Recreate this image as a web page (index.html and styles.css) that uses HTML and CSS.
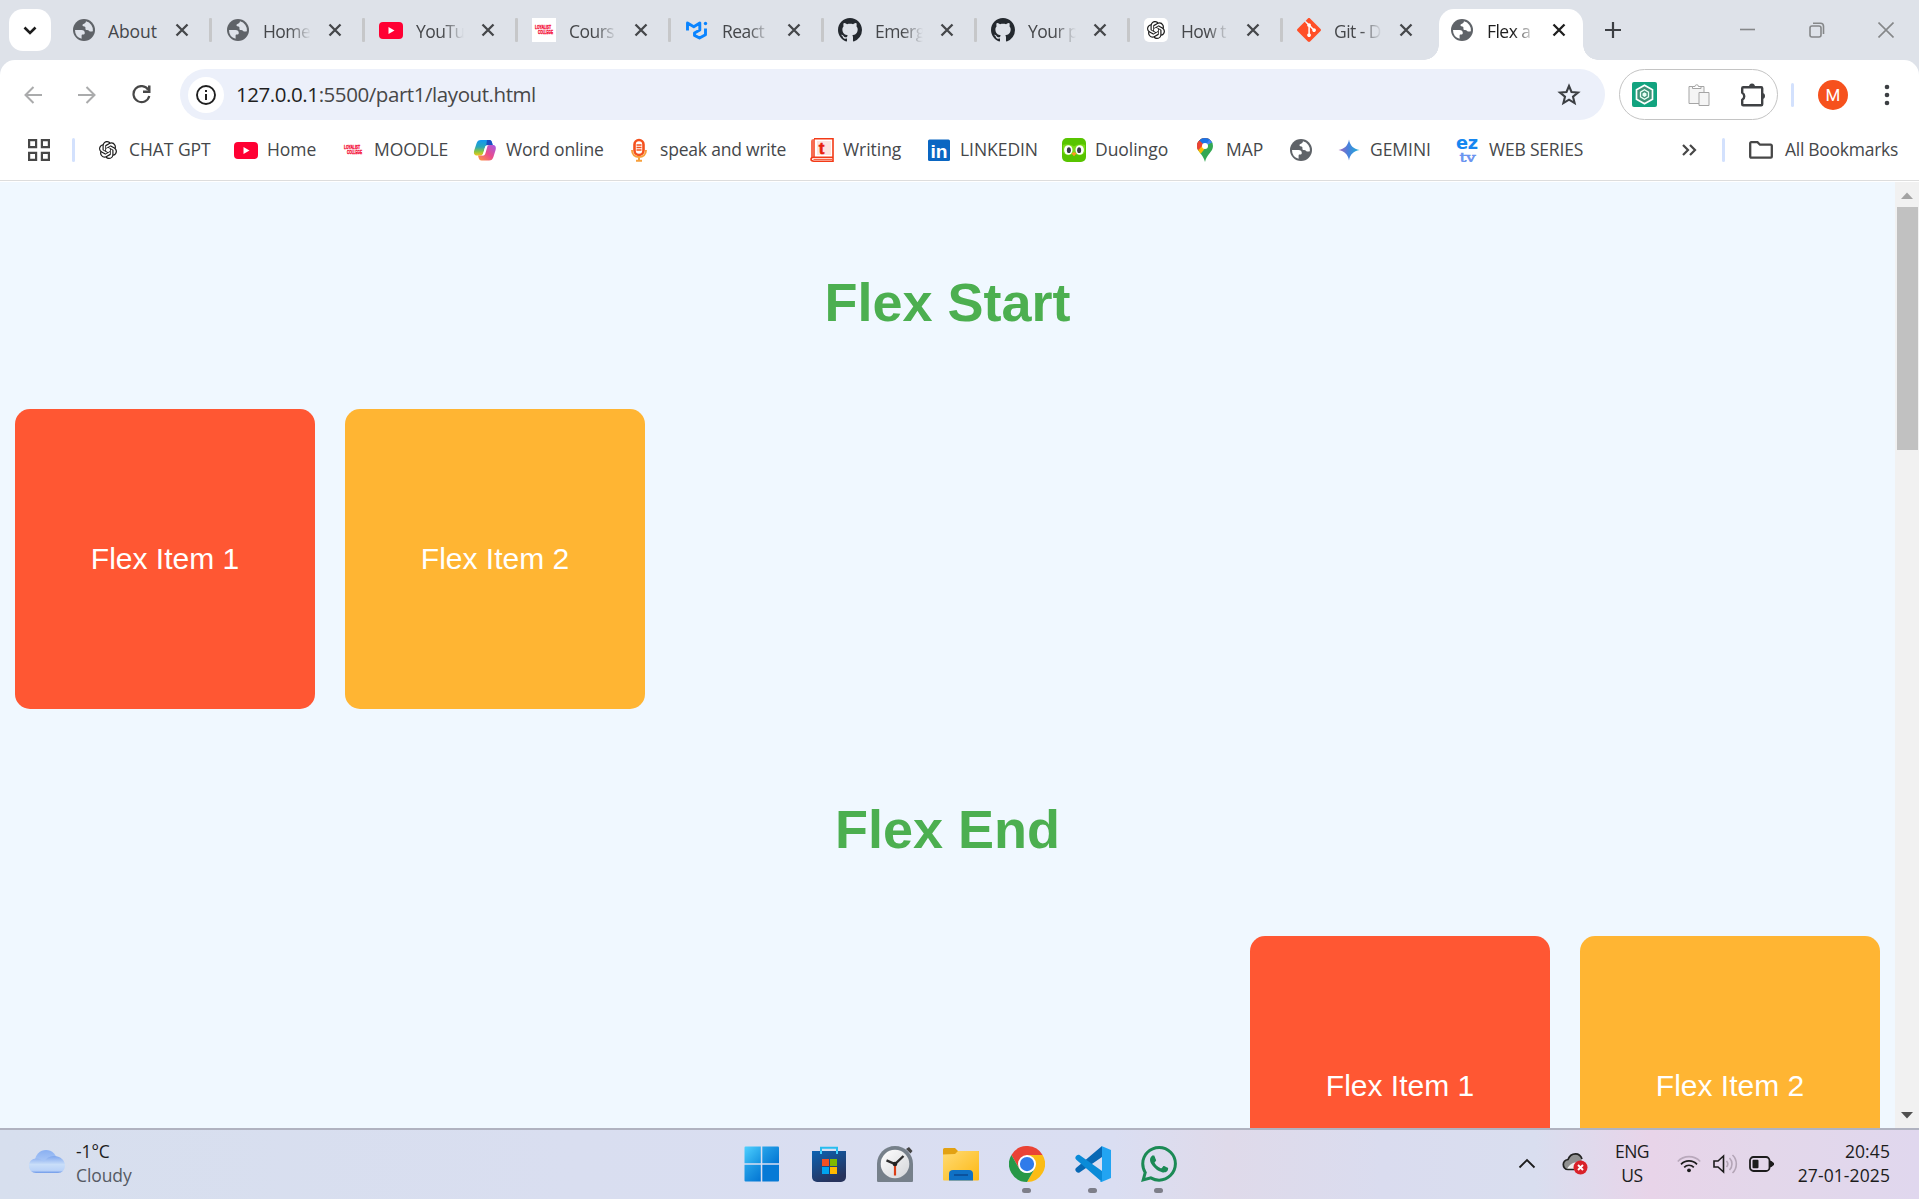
FILE: index.html
```html
<!DOCTYPE html>
<html lang="en">
<head>
<meta charset="utf-8">
<title>Flex and Grid</title>
<link rel="stylesheet" href="styles.css">
</head>
<body>
<svg class="sprite" aria-hidden="true">
  <symbol id="globe" viewBox="0 0 24 24"><circle cx="12" cy="12" r="11" fill="#5f6368"/><g class="land"><path d="M14 3.300c-.3 1.900-1.600 2.300-3 3-.8.500-.8 1.700.3 1.900 1.500.2 2.400.8 2.200 1.900-.2 1-.300 1.700.700 1.800 1.600.1 2.300.1 3 1 .6.700 1.900.5 3.700.300A9 9 0 0 0 14 3.300z"/><path d="M3 12h6.500c2.200 0 3.300 1.300 3.300 3 0 1.200-.8 1.600-2 1.600-.9 0-1.200.5-1.200 1.400v2.700A9 9 0 0 1 3 12z"/></g></symbol>
  <symbol id="close" viewBox="0 0 14 14"><path d="M1.500 1.500l11 11M12.500 1.500l-11 11" stroke="currentColor" stroke-width="2.300" fill="none"/></symbol>
  <symbol id="youtube" viewBox="0 0 24 24"><rect x="0" y="4" width="24" height="17" rx="4" fill="#ff0033"/><path d="M9.500 9l6 3.500-6 3.500z" fill="#fff"/></symbol>
  <symbol id="github" viewBox="0 0 16 16"><path fill="#24292f" d="M8 0C3.580 0 0 3.580 0 8c0 3.540 2.290 6.530 5.470 7.590.4.070.550-.170.550-.380 0-.190-.010-.820-.010-1.490-2.010.370-2.530-.490-2.690-.940-.090-.230-.480-.940-.820-1.130-.280-.150-.680-.520-.010-.530.630-.010 1.080.580 1.230.820.720 1.210 1.870.870 2.330.660.070-.520.280-.870.510-1.070-1.780-.200-3.640-.890-3.640-3.950 0-.870.310-1.590.820-2.150-.080-.200-.360-1.020.080-2.120 0 0 .670-.210 2.200.820.640-.180 1.320-.270 2-.270s1.360.090 2 .270c1.530-1.040 2.200-.820 2.200-.820.440 1.100.160 1.920.080 2.120.510.560.820 1.270.820 2.150 0 3.070-1.870 3.750-3.650 3.950.290.250.540.730.540 1.480 0 1.070-.010 1.930-.010 2.200 0 .210.150.460.550.380A8.010 8.010 0 0016 8c0-4.420-3.580-8-8-8z"/></symbol>
  <symbol id="openai" viewBox="0 0 24 24"><path fill="#1c1c1c" d="M22.2819 9.8211a5.9847 5.9847 0 0 0-.5157-4.9108 6.0462 6.0462 0 0 0-6.5098-2.9A6.0651 6.0651 0 0 0 4.9807 4.1818a5.9847 5.9847 0 0 0-3.9977 2.9 6.0462 6.0462 0 0 0 .7427 7.0966 5.98 5.98 0 0 0 .511 4.9107 6.051 6.051 0 0 0 6.5146 2.9001A5.9847 5.9847 0 0 0 13.2599 24a6.0557 6.0557 0 0 0 5.7718-4.2058 5.9894 5.9894 0 0 0 3.9977-2.9001 6.0557 6.0557 0 0 0-.7475-7.0729zm-9.022 12.6081a4.4755 4.4755 0 0 1-2.8764-1.0408l.1419-.0804 4.7783-2.7582a.7948.7948 0 0 0 .3927-.6813v-6.7369l2.02 1.1686a.071.071 0 0 1 .038.052v5.5826a4.504 4.504 0 0 1-4.4945 4.4944zm-9.6607-4.1254a4.4708 4.4708 0 0 1-.5346-3.0137l.142.0852 4.783 2.7582a.7712.7712 0 0 0 .7806 0l5.8428-3.3685v2.3324a.0804.0804 0 0 1-.0332.0615L9.74 19.9502a4.4992 4.4992 0 0 1-6.1408-1.6464zM2.3408 7.8956a4.485 4.485 0 0 1 2.3655-1.9728V11.6a.7664.7664 0 0 0 .3879.6765l5.8144 3.3543-2.0201 1.1685a.0757.0757 0 0 1-.071 0l-4.8303-2.7865A4.504 4.504 0 0 1 2.3408 7.872zm16.5963 3.8558L13.1038 8.364 15.1192 7.2a.0757.0757 0 0 1 .071 0l4.8303 2.7913a4.4944 4.4944 0 0 1-.6765 8.1042v-5.6772a.79.79 0 0 0-.407-.667zm2.0107-3.0231l-.142-.0852-4.7735-2.7818a.7759.7759 0 0 0-.7854 0L9.409 9.2297V6.8974a.0662.0662 0 0 1 .0284-.0615l4.8303-2.7866a4.4992 4.4992 0 0 1 6.6802 4.66zM8.3065 12.863l-2.02-1.1638a.0804.0804 0 0 1-.038-.0567V6.0742a4.4992 4.4992 0 0 1 7.3757-3.4537l-.142.0805L8.704 5.459a.7948.7948 0 0 0-.3927.6813zm1.0976-2.3654l2.602-1.4998 2.6069 1.4998v2.9994l-2.5974 1.4997-2.6067-1.4997Z"/></symbol>
  <symbol id="loyalist" viewBox="0 0 24 24"><text x="3" y="11" font-family="Liberation Sans" font-weight="bold" font-size="4.800" textLength="16" lengthAdjust="spacingAndGlyphs" fill="#f5173f" stroke="#f5173f" stroke-width=".4">LOYALIST</text><text x="6" y="15.500" font-family="Liberation Sans" font-weight="bold" font-size="4.800" textLength="15" lengthAdjust="spacingAndGlyphs" fill="#f5173f" stroke="#f5173f" stroke-width=".4">COLLEGE</text></symbol>
</svg>

<div class="screen">
  <header class="browser">
    <div class="tabstrip">
      <button class="tab-search"><svg width="14" height="9" viewBox="0 0 14 9"><path d="M1.500 1.500L7 7l5.500-5.500" fill="none" stroke="#1c1c1c" stroke-width="2.600"/></svg></button>
      <nav class="tabs">
        <div class="tab first"><svg class="ico"><use href="#globe"/></svg><span class="title whole">About</span><svg class="x"><use href="#close"/></svg></div>
        <div class="tab"><svg class="ico"><use href="#globe"/></svg><span class="title">Home</span><svg class="x"><use href="#close"/></svg></div>
        <div class="tab"><svg class="ico"><use href="#youtube"/></svg><span class="title">YouTu</span><svg class="x"><use href="#close"/></svg></div>
        <div class="tab"><svg class="ico white"><use href="#loyalist"/></svg><span class="title">Cours</span><svg class="x"><use href="#close"/></svg></div>
        <div class="tab"><svg class="ico" viewBox="0 0 24 24"><g fill="none" stroke="#0a84ff" stroke-width="2.900" stroke-linejoin="round"><path d="M2.500 12.500V5L8.800 8.700 14.800 5v7L9.500 15v2.400L14.500 20l6-3.300V10.500"/></g><circle cx="20.500" cy="5.500" r="1.700" fill="#0a84ff"/></svg><span class="title">React</span><svg class="x"><use href="#close"/></svg></div>
        <div class="tab"><svg class="ico"><use href="#github"/></svg><span class="title">Emerg</span><svg class="x"><use href="#close"/></svg></div>
        <div class="tab"><svg class="ico"><use href="#github"/></svg><span class="title">Your p</span><svg class="x"><use href="#close"/></svg></div>
        <div class="tab"><span class="ico white round"><svg width="18" height="18"><use href="#openai"/></svg></span><span class="title">How t</span><svg class="x"><use href="#close"/></svg></div>
        <div class="tab last"><svg class="ico" viewBox="0 0 24 24"><path fill="#fff" d="M12 3l8 9-8 9-5-9 1-7z"/><path fill="#ff4f27" d="M23.546 10.930L13.067.452c-.604-.603-1.582-.603-2.188 0L8.708 2.627l2.760 2.760c.645-.215 1.379-.070 1.889.441.516.515.658 1.258.438 1.900l2.658 2.660c.645-.223 1.387-.078 1.900.435.721.720.721 1.884 0 2.604-.719.719-1.881.719-2.600 0-.539-.541-.674-1.337-.404-1.996L12.860 8.955v6.525c.176.086.342.203.488.348.713.721.713 1.883 0 2.600-.719.721-1.889.721-2.609 0-.719-.719-.719-1.879 0-2.598.182-.180.387-.316.605-.406V8.835c-.217-.091-.424-.222-.600-.401-.545-.545-.676-1.342-.396-2.009L7.636 3.700.450 10.881c-.600.605-.600 1.584 0 2.189l10.480 10.477c.604.604 1.582.604 2.186 0l10.430-10.430c.605-.603.605-1.582 0-2.187"/></svg><span class="title">Git - D</span><svg class="x"><use href="#close"/></svg></div>
        <div class="tab active"><svg class="ico"><use href="#globe"/></svg><span class="title">Flex a</span><svg class="x"><use href="#close"/></svg></div>
      </nav>
      <button class="new-tab"><svg width="16" height="16" viewBox="0 0 16 16"><path d="M8 0v16M0 8h16" stroke="#3c3f43" stroke-width="2.200"/></svg></button>
      <div class="window-controls">
        <svg width="16" height="16" viewBox="0 0 16 16"><path d="M0 7.500h15" stroke="#858789" stroke-width="1.600"/></svg>
        <svg width="16" height="16" viewBox="0 0 16 16" fill="none" stroke="#858789" stroke-width="1.600"><rect x="1" y="4" width="11" height="11" rx="2"/><path d="M4 1.200h7.500a3 3 0 0 1 3 3V12"/></svg>
        <svg width="16" height="16" viewBox="0 0 16 16"><path d="M.5.500l15 15M15.500.500l-15 15" stroke="#858789" stroke-width="1.600"/></svg>
      </div>
    </div>

    <div class="toolbar">
      <div class="nav-buttons">
        <svg width="18" height="18" viewBox="0 0 18 18" fill="none" stroke="#aaabac" stroke-width="2"><path d="M18 9H1.500M9.500 1L1.500 9l8 8"/></svg>
        <svg width="18" height="18" viewBox="0 0 18 18" fill="none" stroke="#aaabac" stroke-width="2"><path d="M0 9h16.500M8.500 1l8 8-8 8"/></svg>
        <svg width="19" height="19" viewBox="0 0 19 19"><path d="M16.300 4.800A8 8 0 1 0 17.300 11" fill="none" stroke="#474747" stroke-width="2.200"/><path d="M18.500.500V8H11V5.600h5V.500z" fill="#474747"/></svg>
      </div>
      <div class="omnibox">
        <span class="site-info"><svg width="22" height="22" viewBox="0 0 22 22"><circle cx="11" cy="11" r="9" fill="none" stroke="#1f1f1f" stroke-width="1.900"/><path d="M11 10v6M11 6v2" stroke="#1f1f1f" stroke-width="2"/></svg></span>
        <span class="url"><b>127.0.0.1</b>:5500/part1/layout.html</span>
        <svg class="star" width="24" height="24" viewBox="0 0 24 24"><path d="M12 3l2.500 6 6.500.500-5 4.200 1.600 6.400L12 16.700l-5.600 3.400L8 13.700 3 9.500 9.500 9z" fill="none" stroke="#3c3f43" stroke-width="2.100"/></svg>
      </div>
      <div class="extensions">
        <svg width="25" height="25" viewBox="0 0 25 25"><rect width="25" height="25" rx="2" fill="#12a37f"/><path d="M12.500 3.200l8 4.600v9.400l-8 4.600-8-4.600V7.800z" fill="#3f9277" stroke="#fff" stroke-width="1.700"/><path d="M12.500 7.800l4 2.300v4.800l-4 2.300-4-2.300v-4.800z" fill="none" stroke="#e9fff6" stroke-width="1.300"/><path d="M12.500 10.300l2 1.200v2.200l-2 1.200-2-1.200v-2.200z" fill="#e9fff6"/></svg>
        <svg width="22" height="24" viewBox="0 0 22 24" stroke="#a5a5a5" fill="#f5f5f5"><path d="M1 3.500h15v17H1z"/><path d="M4.500 5.500v-2h2.500a1.700 1.700 0 0 1 3.500 0H13v2z" fill="#fff"/><path d="M11 9.500h10v13H11z"/></svg>
        <svg width="26" height="26" viewBox="0 0 26 26"><path d="M3.200 5.200h18a1 1 0 0 1 1 1v16a1 1 0 0 1-1 1h-18a1 1 0 0 1-1-1v-4.500a4 4 0 0 0 0-7V6.200a1 1 0 0 1 1-1z" fill="none" stroke="#3f4144" stroke-width="2.400" stroke-linejoin="round"/><path d="M9 5a3 3.500 0 0 1 6 0zM22 11a3 3 0 0 1 0 6z" fill="#3f4144"/></svg>
      </div>
      <i class="divider"></i>
      <span class="avatar">M</span>
      <svg class="menu-dots" width="6" height="22" viewBox="0 0 6 22" fill="#3c3f43"><circle cx="3" cy="3" r="2.300"/><circle cx="3" cy="11" r="2.300"/><circle cx="3" cy="19" r="2.300"/></svg>
    </div>

    <div class="bookmarks">
      <svg class="apps" width="22" height="22" viewBox="0 0 22 22" fill="none" stroke="#474747" stroke-width="2.200"><path d="M1.100 1.100h7v7h-7zM13.900 1.100h7v7h-7zM1.100 13.900h7v7h-7zM13.900 13.900h7v7h-7z"/></svg>
      <i class="divider"></i>
      <div class="bookmark-list">
        <a><span class="ico"><svg width="18" height="18"><use href="#openai"/></svg></span><span>CHAT GPT</span></a>
        <a><svg class="ico"><use href="#youtube"/></svg><span>Home</span></a>
        <a><svg class="ico"><use href="#loyalist"/></svg><span>MOODLE</span></a>
        <a class="tight"><svg class="ico" viewBox="0 0 24 24"><defs><linearGradient id="cpa" x1="0" y1="0" x2="0" y2="1"><stop offset="0" stop-color="#1297f2"/><stop offset=".45" stop-color="#2aa7b8"/><stop offset=".75" stop-color="#8fc53f"/><stop offset="1" stop-color="#f2c71b"/></linearGradient><linearGradient id="cpb" x1="1" y1="0" x2="0" y2="1"><stop offset="0" stop-color="#a45be6"/><stop offset=".5" stop-color="#ea4c8c"/><stop offset="1" stop-color="#ff9a3c"/></linearGradient></defs><path d="M8 2h8.500c1.500 0 2 1 2.500 2.500l.700 2.500H15c-2 0-2.600 1-3.200 3l-1.300 4.500C10 16.500 9 17.500 7 17.500H4C1 17.500.500 15 1.200 12.500l2.300-7C4.300 3 5.500 2 8 2z" fill="url(#cpa)"/><path d="M14 2h2.500c1.500 0 2 1 2.500 2.500l.700 2.500H15c-.800 0-1.300.200-1.800.600z" fill="#1b4fc4"/><path d="M16 22.500H8.500c-1.800 0-2.300-1-2.800-2.500l-.700-2.500h3.500c2 0 2.800-1 3.400-3l1.200-4.500c.5-2 1.500-3 3.500-3h3.500c2.500 0 3.200 2.500 2.500 5l-2.200 7c-.8 2.500-2 3.500-4.400 3.500z" fill="url(#cpb)"/><path d="M10.500 14.500l1.300-4.500c.3-1.200.8-2 1.700-2.500l1.200 0-2.200 7.500c-.5 1.500-1 2.200-2 2.500H8.800c1-.600 1.400-1.600 1.700-3z" fill="#fff"/></svg><span>Word online</span></a>
        <a class="tight"><svg class="ico" viewBox="0 0 24 24"><rect x="7.500" y="2" width="9" height="15" rx="4.500" fill="#fff" stroke="#f4511e" stroke-width="2.600"/><path d="M9.500 7h5M9.500 9.500h5M9.500 12h5" stroke="#f4511e" stroke-width="1.300"/><path d="M5 12c0 4.500 3 7 7 7s7-2.500 7-7M12 19v3.500M9 22.700h6" fill="none" stroke="#f7a03c" stroke-width="2"/></svg><span>speak and write</span></a>
        <a><svg class="ico" viewBox="0 0 24 24"><path d="M4 .800h19v18.500H4C2 19.300 1 20 1 21.300 1 22.500 2 23.200 4 23.200h19v-3.500" fill="#fff" stroke="#f33a16" stroke-width="1.600"/><path d="M1 21V3.500C1 1.800 2 1 4 1h1v18H3.500z" fill="#f33a16" opacity=".75"/><path d="M7 3h14v14H7z" fill="#fde4df"/><path d="M3.500 21.300H22" stroke="#f33a16"/><text x="8.800" y="15.500" font-family="Liberation Sans" font-weight="bold" font-size="17" fill="#e8200c" stroke="#e8200c" stroke-width=".5">t</text></svg><span>Writing</span></a>
        <a><svg class="ico" viewBox="0 0 24 24"><rect x="1" y="1.500" width="22" height="21.500" rx="1.500" fill="#0a66c2"/><text x="3.500" y="19.500" font-family="Liberation Sans" font-weight="bold" font-size="19" textLength="17" lengthAdjust="spacingAndGlyphs" fill="#fff">in</text></svg><span>LINKEDIN</span></a>
        <a><svg class="ico" viewBox="0 0 24 24"><rect width="24" height="24" rx="5" fill="#58c400"/><path d="M1 7c3-1.500 8-1 11 1.500C15 6 20 5.500 23 7v7c-2 4-8 4-11 1-3 3-9 3-11-1z" fill="#7ddb18"/><ellipse cx="6.300" cy="12" rx="4.200" ry="4.800" fill="#fff"/><ellipse cx="17.700" cy="12" rx="4.200" ry="4.800" fill="#fff"/><ellipse cx="6.900" cy="12.200" rx="2" ry="2.900" fill="#3b3b46"/><ellipse cx="17.100" cy="12.200" rx="2" ry="2.900" fill="#3b3b46"/><path d="M9.500 15.500q2.500-2.500 5 0l-2.500 2.700z" fill="#ff9a1f"/></svg><span>Duolingo</span></a>
        <a><svg class="ico" viewBox="0 0 24 24"><clipPath id="pin"><path d="M12 0a8 8 0 0 0-8 8c0 6 6.300 8 8 16 1.700-8 8-10 8-16a8 8 0 0 0-8-8z"/></clipPath><g clip-path="url(#pin)"><path d="M0 0h24v24H0z" fill="#34a853"/><path d="M0 0h20L8 14 2 10z" fill="#ea4335"/><path d="M5.500 3L12 8 20.500-2H7z" fill="#1a73e8"/><path d="M12 8l5.500-8H24v3.500l-5 1z" fill="#4285f4"/><path d="M2 14l6.500-8L13 9l-7 9z" fill="#fbbc04"/><path d="M3 3l3.500-.500 4 4-5.500 6-2-1z" fill="#ea4335"/></g><circle cx="12" cy="8" r="3" fill="#fff"/></svg><span>MAP</span></a>
        <a><svg class="ico"><use href="#globe"/></svg></a>
        <a><svg class="ico" viewBox="0 0 24 24"><defs><linearGradient id="gem" x1="0" x2="1"><stop offset="0" stop-color="#a368b8"/><stop offset=".45" stop-color="#4a7fdc"/><stop offset="1" stop-color="#1fb0d8"/></linearGradient></defs><path d="M12 1.500c1 6 4.500 9.500 10.500 10.500-6 1-9.500 4.500-10.500 10.500C11 16.500 7.500 13 1.500 12 7.500 11 11 7.500 12 1.500z" fill="url(#gem)"/></svg><span>GEMINI</span></a>
        <a class="tight"><svg class="ico" viewBox="0 0 24 24"><text x="0" y="11" font-family="DejaVu Sans" font-weight="bold" font-size="17" textLength="22" lengthAdjust="spacingAndGlyphs" fill="#1687f0">ez</text><text x="3.500" y="24" font-family="DejaVu Serif" font-size="13" textLength="16" lengthAdjust="spacingAndGlyphs" fill="#6a93f0" stroke="#6a93f0" stroke-width=".6">tv</text></svg><span>WEB SERIES</span></a>
      </div>
      <svg class="more" width="15" height="12" viewBox="0 0 15 12"><path d="M1 1l5 5-5 5M8 1l5 5-5 5" fill="none" stroke="#474747" stroke-width="2.200"/></svg>
      <i class="divider"></i>
      <a class="all"><svg width="24" height="18" viewBox="0 0 24 18"><path d="M2.200 1.200h6.300l2.500 2.500h10.800a1 1 0 0 1 1 1v11a1 1 0 0 1-1 1H2.200a1 1 0 0 1-1-1V2.200a1 1 0 0 1 1-1z" fill="none" stroke="#474747" stroke-width="2.300"/></svg><span>All Bookmarks</span></a>
    </div>
  </header>

  <div class="viewport">
    <main class="page">
      <h1>Flex Start</h1>
      <div class="flex-row start"><div class="box red">Flex Item 1</div><div class="box amber">Flex Item 2</div></div>
      <h1>Flex End</h1>
      <div class="flex-row end"><div class="box red">Flex Item 1</div><div class="box amber">Flex Item 2</div></div>
    </main>
    <div class="scrollbar">
      <svg width="12" height="7" viewBox="0 0 12 7"><path d="M0 7l6-6.500L12 7z" fill="#a3a3a3"/></svg>
      <i class="thumb"></i>
      <svg class="down" width="12" height="7" viewBox="0 0 12 7"><path d="M0 0l6 6.500L12 0z" fill="#505050"/></svg>
    </div>
  </div>

  <footer class="taskbar">
    <div class="weather">
      <svg width="36" height="24" viewBox="0 0 36 24"><defs><linearGradient id="cl" x1="0" y1="0" x2="0" y2="1"><stop offset="0" stop-color="#8ab0f2"/><stop offset="1" stop-color="#c6dcfa"/></linearGradient><linearGradient id="cl2" x1="0" y1="0" x2="0" y2="1"><stop offset="0" stop-color="#7fa6ee"/><stop offset=".5" stop-color="#c9def9"/><stop offset=".85" stop-color="#b9d2f8"/><stop offset="1" stop-color="#6d98e8"/></linearGradient></defs><circle cx="17" cy="12" r="11" fill="url(#cl)"/><path d="M7 9.500c3.500 0 6 1.500 8 3.500 2-4 5.500-6 10-6 6 0 11 4 11 9.500C36 21 33 24 29 24H7c-4 0-7-3-7-7.200C0 12.500 3 9.500 7 9.500z" fill="url(#cl2)"/></svg>
      <p><span>-1°C</span><span class="muted">Cloudy</span></p>
    </div>

    <div class="apps-dock">
      <span class="app"><svg width="36" height="36" viewBox="0 0 36 36"><defs><linearGradient id="w" x1="0" y1="0" x2="1" y2="1" gradientUnits="objectBoundingBox"><stop offset="0" stop-color="#4fd0ff"/><stop offset="1" stop-color="#1492e0"/></linearGradient><linearGradient id="w2" x1="0" y1="0" x2="1" y2="1"><stop offset="0" stop-color="#28a5ea"/><stop offset="1" stop-color="#0275d3"/></linearGradient></defs><path d="M.5 1.500a1 1 0 0 1 1-1h15.300v16.800H.5z" fill="url(#w)"/><path d="M18.300.500h15.700a1 1 0 0 1 1 1v15.800H18.300z" fill="url(#w2)"/><path d="M.5 18.800h16.300v16.700H1.500a1 1 0 0 1-1-1z" fill="url(#w2)"/><path d="M18.300 18.800H35v15.700a1 1 0 0 1-1 1H18.300z" fill="#067ad6"/></svg></span>
      <span class="app"><svg width="36" height="36" viewBox="0 0 36 36"><defs><linearGradient id="st" x1="0" y1="0" x2=".5" y2="1"><stop offset="0" stop-color="#0c62b3"/><stop offset="1" stop-color="#27335c"/></linearGradient></defs><path d="M10 8V1.800h16V8" fill="none" stroke="#29bdef" stroke-width="2"/><path d="M1 5h34v26a5 5 0 0 1-5 5H6a5 5 0 0 1-5-5z" fill="url(#st)"/><path d="M10 8V5M26 8V5" stroke="#3fd0ff" stroke-width="2"/><path d="M11 13h7v7h-7z" fill="#f25022"/><path d="M19 13h7v7h-7z" fill="#7fba00"/><path d="M11 21h7v7h-7z" fill="#00a4ef"/><path d="M19 21h7v7h-7z" fill="#ffb900"/></svg></span>
      <span class="app"><svg width="36" height="36" viewBox="0 0 36 36"><defs><linearGradient id="ck" x1="0" y1="0" x2="1" y2="1"><stop offset="0" stop-color="#fff"/><stop offset="1" stop-color="#d3d5d8"/></linearGradient></defs><path d="M29 3l3-2 3.500 4-2 2.500z" fill="#454545"/><path d="M18 0c10 0 18 8 18 18v16.500c0 1-.5 1.500-1.500 1.500h-33C.500 36 0 35.500 0 34.500V18C0 8 8 0 18 0z" fill="#76808a"/><circle cx="18" cy="18" r="14.300" fill="url(#ck)"/><path d="M18 18v11.500" stroke="#dc3e15" stroke-width="2.200"/><path d="M9.500 14.300L18 18l8.500-8" fill="none" stroke="#2c2c2c" stroke-width="2.400"/><circle cx="18" cy="18" r="2.300" fill="#222"/></svg></span>
      <span class="app"><svg width="36" height="36" viewBox="0 0 36 36"><defs><linearGradient id="fo" x1="0" y1="0" x2="1" y2="1"><stop offset="0" stop-color="#ffdb74"/><stop offset="1" stop-color="#fdb813"/></linearGradient></defs><path d="M0 3.500A1.500 1.500 0 0 1 1.500 2H12l3 3h20a1 1 0 0 1 1 1v3H0z" fill="#e2a112"/><path d="M0 8.500l12-.500 3-3h20a1 1 0 0 1 1 1v27.500a1 1 0 0 1-1 1H1a1 1 0 0 1-1-1z" fill="url(#fo)"/><path d="M6 34.500V28a4 4 0 0 1 4-4h16a4 4 0 0 1 4 4v6.500z" fill="#0f71c5"/><path d="M11 29h14" stroke="#0a4c93" stroke-width="1.600"/></svg></span>
      <span class="app open"><svg width="36" height="36" viewBox="0 0 48 48"><path d="M3.200 12A24 24 0 0 1 44.800 12H24L13.600 30z" fill="#ea4335"/><path d="M44.800 12A24 24 0 0 1 24 48L34.400 30 24 12z" fill="#fbbc15"/><path d="M24 48A24 24 0 0 1 3.200 12L13.600 30A12 12 0 0 0 34.400 30z" fill="#279847"/><circle cx="24" cy="24" r="12" fill="#fff"/><circle cx="24" cy="24" r="9.500" fill="#2f7bea"/></svg></span>
      <span class="app open"><svg width="36" height="36" viewBox="0 0 36 36"><path d="M27 0v11L4.500 26.500C3 27.500 1 26 .5 24.500c-.4-1 0-2 .800-2.700z" fill="#0868b4"/><path d="M27 36V25L4.500 9C3 8.200 1 9.500.500 11c-.4 1 0 2 .8 2.700z" fill="#0a8bd8"/><path d="M26.500 0L36 4v28l-9.500 4c-.8.300-1.500-.5-1.500-.5l2-1V1.500z" fill="#22a4f2"/></svg></span>
      <span class="app open"><svg width="36" height="36" viewBox="0 0 24 24"><path fill="#1b8a55" d="M17.472 14.382c-.297-.149-1.758-.867-2.030-.967-.273-.099-.471-.148-.670.150-.197.297-.767.966-.940 1.164-.173.199-.347.223-.644.075-.297-.150-1.255-.463-2.390-1.475-.883-.788-1.480-1.761-1.653-2.059-.173-.297-.018-.458.130-.606.134-.133.298-.347.446-.520.149-.174.198-.298.298-.497.099-.198.050-.371-.025-.520-.075-.149-.669-1.612-.916-2.207-.242-.579-.487-.500-.669-.510-.173-.008-.371-.010-.570-.010-.198 0-.520.074-.792.372-.272.297-1.040 1.016-1.040 2.479 0 1.462 1.065 2.875 1.213 3.074.149.198 2.096 3.200 5.077 4.487.709.306 1.262.489 1.694.625.712.227 1.360.195 1.871.118.571-.085 1.758-.719 2.006-1.413.248-.694.248-1.289.173-1.413-.074-.124-.272-.198-.570-.347m-5.421 7.403h-.004a9.870 9.870 0 01-5.031-1.378l-.361-.214-3.741.982.998-3.648-.235-.374a9.860 9.860 0 01-1.510-5.260c.001-5.450 4.436-9.884 9.888-9.884 2.640 0 5.122 1.030 6.988 2.898a9.825 9.825 0 012.893 6.994c-.003 5.450-4.437 9.884-9.885 9.884m8.413-18.297A11.815 11.815 0 0012.050 0C5.495 0 .160 5.335.157 11.892c0 2.096.547 4.142 1.588 5.945L.057 24l6.305-1.654a11.882 11.882 0 005.683 1.448h.005c6.554 0 11.890-5.335 11.893-11.893a11.821 11.821 0 00-3.480-8.413z"/></svg></span>
    </div>

    <div class="tray">
      <svg width="18" height="11" viewBox="0 0 18 11"><path d="M1.500 9.500L9 2l7.500 7.500" fill="none" stroke="#1c1c1c" stroke-width="1.800"/></svg>
      <svg class="cloud" width="26" height="23" viewBox="0 0 26 23"><path d="M6 17C3 17 1.500 15 1.500 12.500S3.500 8 6 7.500C7.500 3.500 10.500 2 13.500 2s5 2 6 4.500L20 17z" fill="#919191"/><path d="M5 17c3-6 9-8 16-7v7z" fill="#eee"/><path d="M6 17.500C3 17.500 1.300 15 1.300 12.500S3.500 8 6 7.500C7.500 3.500 10.500 1.800 13.500 1.800c3.500 0 5.500 2.200 6.500 5.200M6 17.500h6" fill="none" stroke="#222" stroke-width="1.700"/><circle cx="18.500" cy="15.500" r="7" fill="#d9222a"/><path d="M16 13l5 5M21 13l-5 5" stroke="#fff" stroke-width="1.900"/></svg>
      <p class="lang"><span>ENG</span><span>US</span></p>
      <svg class="wifi" width="24" height="18" viewBox="0 0 24 18" fill="none" stroke="#1c1c1c" stroke-width="1.700"><path d="M.8 6.500a15.500 15.500 0 0 1 22.400 0" stroke="#b9a9bc"/><path d="M4 9.300a11 11 0 0 1 16 0M7.200 12.300a6.600 6.600 0 0 1 9.600 0"/><circle cx="12" cy="15.300" r="1.900" fill="#1c1c1c" stroke="none"/></svg>
      <svg class="speaker" width="25" height="20" viewBox="0 0 25 20" fill="none" stroke="#1c1c1c" stroke-width="1.600"><path d="M1 7h4l5.500-5v16L5 13H1z"/><g stroke="#b3a5b6"><path d="M13.500 7a4.500 4.500 0 0 1 0 6M16.500 4a8.500 8.500 0 0 1 0 12M19.500 1a12.500 12.500 0 0 1 0 18"/></g></svg>
      <svg class="battery" width="25" height="16" viewBox="0 0 25 16"><rect x="1" y="1" width="19.500" height="14" rx="3.500" fill="none" stroke="#1c1c1c" stroke-width="1.800"/><rect x="3.500" y="3.700" width="6" height="8.600" rx="1" fill="#1c1c1c"/><path d="M21.500 5v6l3-2V7z" fill="#1c1c1c" stroke="#1c1c1c"/></svg>
      <p class="clock"><span>20:45</span><span>27-01-2025</span></p>
    </div>
  </footer>
</div>
</body>
</html>
```
FILE: styles.css
```css
* { box-sizing: border-box; }
body { margin: 0; font-family: "Open Sans", "Noto Sans", sans-serif; font-size: 17.500px; color: #45474a; }
p, h1 { margin: 0; }
button { border: 0; padding: 0; background: none; }
.sprite { display: none; }
svg { flex: none; }
.screen { width: 1919px; height: 1199px; display: flex; flex-direction: column; overflow: hidden; }

/* Tab strip */
.browser { height: 182px; background: #dee2e9; flex: none; }
.tabstrip { height: 60px; padding: 9px 25px 0 9px; display: flex; }
.tab-search { width: 42px; height: 42px; border-radius: 14px; background: #fff; display: flex; align-items: center; justify-content: center; }
.tabs { display: flex; margin-left: 7px; }
.tab { width: 153px; height: 51px; padding: 0 0 9px 14px; display: flex; align-items: center; position: relative; color: #45474a; }
.tab.first { width: 154px; }
.tab::after { content: ""; width: 3px; height: 24px; margin-left: auto; border-radius: 1px; background: #c6c7c9; }
.tab.last::after, .tab.active::after { background: none; }
.ico { width: 24px; height: 24px; flex: none; display: flex; align-items: center; justify-content: center; }
.white { background: #fff; }
.round { border-radius: 5px; }
.land { fill: #dee2e9; }
.title { width: 48px; margin-left: 13px; height: 26px; line-height: 26px; margin-top: 2px; overflow: hidden; white-space: nowrap; letter-spacing: -0.550px; mask-image: linear-gradient(90deg, #000 55%, transparent 100%); }
.title.whole { width: 51px; margin-left: 12px; margin-right: -1px; letter-spacing: -0.100px; mask-image: none; }
.x { width: 14px; height: 14px; margin-left: 17px; }
.tab.active { width: 144px; margin-left: 3px; padding-left: 11px; border-radius: 15px 15px 0 0; background: #fff; color: #1f1f1f; }
.tab.active::before { content: ""; position: absolute; left: -15px; right: -15px; bottom: 0; height: 15px; background: radial-gradient(circle at 0 0, transparent 14.500px, #fff 15px) left / 15px 15px no-repeat, radial-gradient(circle at 100% 0, transparent 14.500px, #fff 15px) right / 15px 15px no-repeat; }
.new-tab { margin-left: 22px; height: 42px; display: flex; align-items: center; }
.window-controls { margin-left: auto; height: 42px; padding-bottom: 1px; display: flex; gap: 53px; align-items: center; }

/* Toolbar */
.toolbar { height: 60px; padding-top: 9px; display: flex; align-items: center; background: #fff; border-radius: 15px 15px 0 0; }
.nav-buttons { width: 180px; padding-left: 24px; display: flex; align-items: center; gap: 36px; }
.omnibox { width: 1425px; height: 51px; padding: 0 24px 0 8px; border-radius: 26px; background: #ecf0fa; display: flex; align-items: center; }
.site-info { width: 36px; height: 36px; border-radius: 50%; background: #fff; display: flex; align-items: center; justify-content: center; }
.url { margin-left: 12px; padding-bottom: 2px; font-size: 20.500px; letter-spacing: -0.430px; color: #474747; }
.url b { font-weight: 400; color: #1f1f1f; }
.star { margin-left: auto; }
.extensions { width: 159px; height: 51px; margin-left: 14px; padding: 0 11px 0 12px; border: 1.500px solid #c4c4c4; border-radius: 26px; display: flex; align-items: center; justify-content: space-between; }
.divider { width: 3px; height: 24px; border-radius: 2px; background: #d3e1fd; flex: none; }
.toolbar .divider { margin-left: 13px; }
.avatar { width: 30px; height: 30px; margin-left: 24px; border-radius: 50%; background: #f6511d; color: #fff; font: 17px/30px Roboto, sans-serif; text-align: center; }
.menu-dots { margin-left: 36px; }

/* Bookmarks */
.bookmarks { height: 62px; padding: 0 20px 2px 28px; display: flex; align-items: center; background: linear-gradient(#fff, #fff) 0 0 / 100% 60px no-repeat, linear-gradient(#ddd, #ddd) 0 60px / 100% 1px no-repeat #fff; }
.bookmarks .divider { margin-left: 22px; }
.bookmark-list { margin-left: 21px; display: grid; grid-template-columns: 138px 107px 132px 154px 183px 117px 135px 131px 96px 48px 119px 134px; letter-spacing: -0.050px; }
.bookmark-list .tight { letter-spacing: -0.200px; }
.bookmark-list a, .all { display: flex; align-items: center; white-space: nowrap; }
.bookmark-list span:not(.ico) { margin-left: 9px; padding-bottom: 2px; }
.bookmark-list .land, .bookmark-list .ico { fill: #fff; }
.bookmarks .ico, .active .ico { --land: #fff; }
.land { fill: var(--land, #dee2e9); }
.more { margin-left: 92px; }
.bookmarks .more + .divider { margin-left: 25px; }
.all { margin-left: 24px; }
.all span { margin-left: 12px; padding-bottom: 2px; letter-spacing: -0.280px; }

/* Web page */
.viewport { flex: 1; min-height: 0; display: flex; overflow: hidden; }
.page { width: 1895px; background: #f0f8ff; overflow: hidden; font-family: "Liberation Sans", Arial, sans-serif; }
.page h1 { height: 227px; padding-top: 89px; font-size: 54px; line-height: 62px; text-align: center; color: #4caf50; }
.flex-row { display: flex; gap: 30px; padding: 0 15px; }
.flex-row.end { justify-content: flex-end; }
.box { width: 300px; height: 300px; border-radius: 15px; display: flex; align-items: center; justify-content: center; font-size: 30px; color: #fff; }
.red { background: #ff5733; }
.amber { background: #ffb533; }
.scrollbar { width: 24px; padding: 10px 0 9px; background: #f1f1f1; display: flex; flex-direction: column; align-items: center; }
.thumb { width: 21px; height: 243px; margin-top: 8px; background: #c1c1c1; }
.scrollbar .down { margin-top: auto; }

/* Taskbar */
.taskbar { height: 71px; flex: none; border-top: 2px solid #b0b2c0; display: grid; grid-template-columns: 729px 462px 1fr; background: linear-gradient(90deg, #d7dfee 0, #d9def0 30%, #dadef2 58%, #dfdaea 64%, #dadcef 72%, #d9deef 80%, #e8d4e9 86%, #e3d7ea 92%, #e0d7ee 100%); color: #1c1c1c; }
.taskbar p { display: flex; flex-direction: column; line-height: 24px; }
.weather { display: flex; padding: 9px 0 0 29px; }
.weather svg { margin-top: 10px; }
.weather p { margin-left: 11px; letter-spacing: -0.100px; }
.muted { color: #555a63; }
.apps-dock { display: flex; }
.app { width: 66px; height: 69px; padding: 16px 0 0 1px; display: flex; flex-direction: column; align-items: center; }
.app:first-child { padding-left: 0; }
.app.open::after { content: ""; width: 9px; height: 5px; margin-top: 6px; border-radius: 3px; background: #7d7e89; }
.tray { display: flex; align-items: center; padding: 0 29px 2px 327px; }
.tray p { padding-bottom: 2px; }
.cloud { margin-left: 26px; }
.lang { width: 40px; margin-left: 24px; align-items: center; letter-spacing: -0.500px; }
.wifi { margin-left: 25px; }
.speaker { margin-left: 12px; }
.battery { margin-left: 11px; }
.clock { margin-left: auto; align-items: flex-end; letter-spacing: 0.100px; }
```
